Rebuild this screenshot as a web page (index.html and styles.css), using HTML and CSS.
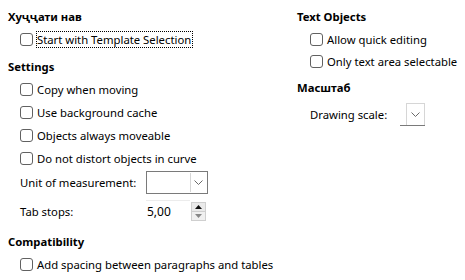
FILE: index.html
```html
<!DOCTYPE html>
<html>
<head>
<meta charset="utf-8">
<link rel="stylesheet" href="styles.css">
</head>
<body>
<div class="page">
  <div class="col col-left">
    <div class="heading">Хуҷҷати нав</div>
    <div class="row check first"><span class="box"></span><span class="label focus">Start with Template Selection</span></div>

    <div class="heading sec">Settings</div>
    <div class="row check first r23"><span class="box"></span><span class="label">Copy when moving</span></div>
    <div class="row check r23"><span class="box"></span><span class="label">Use background cache</span></div>
    <div class="row check r23"><span class="box"></span><span class="label">Objects always moveable</span></div>
    <div class="row check r23"><span class="box"></span><span class="label">Do not distort objects in curve</span></div>

    <div class="row field unit">
      <span class="flabel w-unit">Unit of measurement:</span>
      <span class="combo">
        <span class="combo-text"></span>
        <span class="combo-btn"><svg width="9" height="6" viewBox="0 0 9 6"><polyline points="0.5,0.5 4.5,4.5 8.5,0.5" fill="none" stroke="#6a6a6a" stroke-width="1"/></svg></span>
      </span>
    </div>
    <div class="row field tab">
      <span class="flabel w-unit">Tab stops:</span>
      <span class="spin">
        <span class="spin-text">5,00</span>
        <span class="spin-btns">
          <span class="sbtn up"><svg width="7" height="4" viewBox="0 0 7 4"><polygon points="0,4 3.5,0 7,4" fill="#111"/></svg></span>
          <span class="sbtn down"><svg width="7" height="4" viewBox="0 0 7 4"><polygon points="0,0 3.5,4 7,0" fill="#888"/></svg></span>
        </span>
      </span>
    </div>

    <div class="heading compat">Compatibility</div>
    <div class="row check addsp"><span class="box"></span><span class="label">Add spacing between paragraphs and tables</span></div>
  </div>

  <div class="col col-right">
    <div class="heading">Text Objects</div>
    <div class="row check first"><span class="box"></span><span class="label">Allow quick editing</span></div>
    <div class="row check"><span class="box"></span><span class="label">Only text area selectable</span></div>

    <div class="heading scale-h">Масштаб</div>
    <div class="row field scale">
      <span class="flabel w-scale">Drawing scale:</span>
      <span class="mini-combo">
        <span class="mini-text"></span>
        <span class="mini-btn"><svg width="9" height="6" viewBox="0 0 9 6"><polyline points="0.5,0.5 4.5,4.5 8.5,0.5" fill="none" stroke="#6a6a6a" stroke-width="1"/></svg></span>
      </span>
    </div>
  </div>
</div>
</body>
</html>
```

FILE: styles.css
```css
html, body {
  margin: 0;
  padding: 0;
  background: #ffffff;
}

body {
  font-family: "Noto Sans", "Open Sans", sans-serif;
  font-size: 11.3px;
  color: #000;
}

.page {
  display: flex;
  padding: 9px 0 0 8px;
}

.col {
  display: flex;
  flex-direction: column;
}

.col-left {
  width: 289px;
  flex: none;
}

.col-right {
  flex: 1;
  white-space: nowrap;
}

.heading {
  font-weight: bold;
  height: 16px;
  line-height: 16px;
}

.heading.sec {
  margin-top: 9px;
}

.heading.compat {
  margin-top: 12px;
}

.heading.scale-h {
  margin-top: 8px;
}

.row {
  display: flex;
  align-items: center;
  height: 22px;
  padding-left: 12px;
  white-space: nowrap;
}

.col-right .row {
  padding-left: 13px;
}

.row.first {
  margin-top: 3px;
}

.row.r23 {
  height: 23px;
}

.row.addsp {
  margin-top: 3px;
}

.box {
  width: 11px;
  height: 11px;
  border: 1px solid #616161;
  border-radius: 3px;
  background: #fff;
  flex: none;
  margin-right: 3px;
}

.label {
  line-height: 15px;
  padding: 0 1px 0 0;
  border: 1px solid transparent;
}

.label.focus {
  border: 1px dotted #000;
}

.row.field.unit {
  height: 23px;
  margin-top: 1px;
}

.row.field.tab {
  height: 22px;
  margin-top: 6px;
}

.row.field.scale {
  height: 23px;
  margin-top: 7px;
}

.flabel {
  flex: none;
}

.w-unit {
  width: 126px;
}

.w-scale {
  width: 90px;
}

.combo {
  display: flex;
  width: 58px;
  height: 19px;
  border: 1px solid #7a7a7a;
  background: #fff;
  padding: 1px;
  box-sizing: content-box;
}

.combo-text {
  flex: 1;
}

.combo-btn {
  width: 15px;
  border-left: 1px solid #d6d6d6;
  display: flex;
  align-items: center;
  justify-content: center;
  background: #fff;
}

.spin {
  display: flex;
  height: 22px;
  width: 60px;
}

.spin-text {
  flex: 1;
  background: #fff;
  border-top: 1px solid #ececec;
  display: flex;
  align-items: center;
  padding-left: 1px;
  font-size: 12px;
}

.spin-btns {
  width: 15px;
  display: flex;
  flex-direction: column;
  justify-content: center;
  margin-left: 1px;
}

.sbtn {
  height: 8px;
  background: #eaeaea;
  border: 1px solid #cfcfcf;
  display: flex;
  align-items: center;
  justify-content: center;
}

.sbtn.down {
  border-top: none;
  background: #f0f0f0;
}

.mini-combo {
  display: flex;
  height: 23px;
  border-bottom: 1px solid #7a7a7a;
  box-sizing: border-box;
}

.mini-text {
  width: 6px;
  background: #fff;
}

.mini-btn {
  width: 17px;
  border: 1px solid #d6d6d6;
  border-bottom: none;
  display: flex;
  align-items: center;
  justify-content: center;
  background: #fff;
}
```
